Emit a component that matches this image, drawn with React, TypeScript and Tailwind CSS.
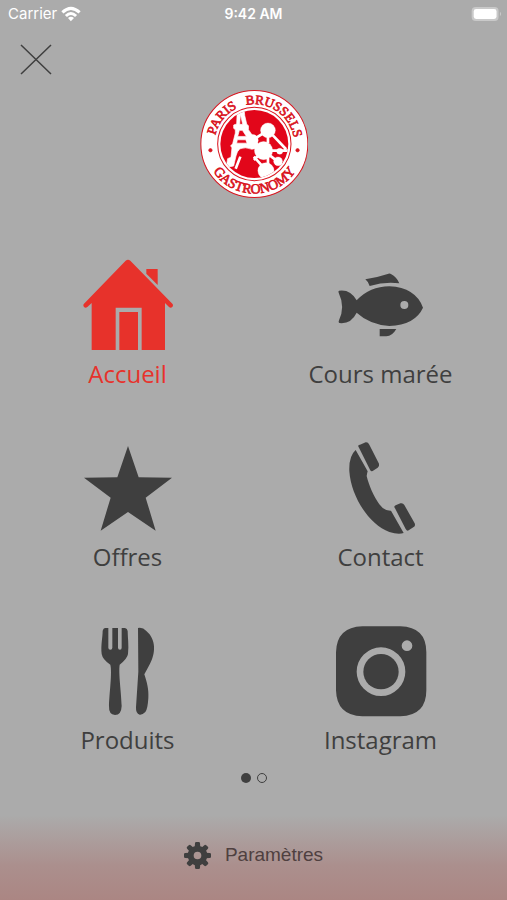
import type { ReactNode } from "react";

interface MenuItem {
  label: string;
  href: string;
  icon: ReactNode;
  active?: boolean;
}

function HomeIcon() {
  return (
    <svg viewBox="0 0 276 276" className="size-23" fill="currentColor" aria-hidden="true">
      <path d="M131 5q7-6 14 0L271 134q4 5 0 10q-5 4-10 0L249 132V273H179V146H101V273H29V132L16 144q-5 4-10 0q-4-5 0-10Z" />
      <path d="M112 159H168V273H112Z" />
      <path d="M193 30H227V78L193 44Z" />
    </svg>
  );
}

function FishIcon() {
  return (
    <svg viewBox="0 0 276 276" className="size-23" fill="currentColor" aria-hidden="true">
      <path d="M91 61Q125 56 158 45Q164 42 169 46Q184 53 193 73Q150 67 104 81Q100 68 91 61Z" />
      <path d="M134 210H184Q172 231 154 232H134Z" />
      <path
        fillRule="evenodd"
        d="M12 95Q46 90 65 124Q105 82 163 82Q242 86 264 146Q240 198 163 201Q103 196 65 161Q48 196 13 192Q9 190 12 184Q31 143 11 101Q9 97 12 95ZM208 126a12 12 0 1 0 0 24a12 12 0 1 0 0-24Z"
      />
    </svg>
  );
}

function StarIcon() {
  return (
    <svg viewBox="0 0 276 276" className="size-23" fill="currentColor" aria-hidden="true">
      <path d="M138 12L170 106L270 107L191 167L221 266L138 210L56 266L86 167L6 107L106 106Z" />
    </svg>
  );
}

function PhoneIcon() {
  return (
    <svg viewBox="5 0 276 276" className="size-23" fill="currentColor" aria-hidden="true">
      <path d="M67 24Q46 42 48 88C53 163 107 248 168 270Q194 278 211 273L173 206Q152 207 138 187C121 162 107 131 100 102Q101 94 103 88Z" />
      <path d="M77 17Q71 9 80 8L97 1Q104 0 108 8L137 65Q139 73 133 77L118 87Q113 89 110 83Z" />
      <path d="M185 199Q180 193 187 190L201 184Q209 182 213 189L244 244Q247 252 241 255L226 265Q221 268 217 261Z" />
    </svg>
  );
}

function CutleryIcon() {
  return (
    <svg viewBox="0 0 276 276" className="size-23" fill="currentColor" aria-hidden="true">
      <path d="M69 9H79V68Q79 74 85 74Q91 74 91 68V9H108V68Q108 74 114 74Q119 74 119 68V9H129Q136 10 137 18C137 37 141 60 138 87Q136 101 113 119C109 143 118 204 119 243Q118 270 99 270Q80 269 81 243C82 204 91 143 85 119Q62 104 59 87C56 60 62 37 62 17Q64 10 69 9Z" />
      <path d="M168 9Q182 6 193 18C223 43 221 85 204 116Q195 133 187 148C194 170 201 192 199 220Q197 253 190 261Q181 270 173 269Q161 266 162 247L169 140Z" />
    </svg>
  );
}

function InstagramIcon() {
  return (
    <svg viewBox="0 0 276 276" className="size-23" fill="currentColor" aria-hidden="true">
      <path
        fillRule="evenodd"
        d="M82 4H196Q274 6 274 82V196Q274 272 196 274H82Q5 272 3 196V82Q5 6 82 4ZM138 67a73 73 0 1 0 0 146a73 73 0 1 0 0-146ZM216 46a16 16 0 1 0 0 32a16 16 0 1 0 0-32Z"
      />
      <circle cx="138" cy="140" r="53" />
    </svg>
  );
}

function GearIcon() {
  const teeth = [0, 45, 90, 135, 180, 225, 270, 315];

  return (
    <svg viewBox="0 0 81 81" className="size-[27px]" fill="currentColor" aria-hidden="true">
      {teeth.map((angle) => (
        <path
          key={angle}
          d="M32 17L33 4Q33 0 37 0H44Q48 0 48 4L49 17Z"
          transform={`rotate(${angle} 40.5 40.5)`}
        />
      ))}
      <path
        fillRule="evenodd"
        d="M40.5 11a29.500 29.500 0 1 0 0 59a29.500 29.500 0 1 0 0-59ZM40.500 29a11.500 11.500 0 1 1 0 23a11.500 11.500 0 1 1 0-23Z"
      />
    </svg>
  );
}

function Logo() {
  return (
    <svg viewBox="32 32 321 321" className="size-27" role="img" aria-label="Paris Brussels Gastronomy">
      <defs>
        <path id="arc-top" d="M75 192.500A118.500 118.500 0 0 1 312 192.500" />
        <path id="arc-bottom" d="M46.500 192.500A147 147 0 0 0 340.500 192.500" />
        <clipPath id="disc">
          <circle cx="193.500" cy="192.500" r="101" />
        </clipPath>
      </defs>
      <circle cx="193.500" cy="192.500" r="159" fill="#fff" stroke="#d9141e" strokeWidth="3" />
      <circle cx="193.500" cy="192.500" r="109" fill="none" stroke="#d9141e" strokeWidth="3" />
      <circle cx="193.500" cy="192.500" r="101" fill="#e2061a" />
      <g clipPath="url(#disc)" fill="#fff" stroke="#fff">
        {/* Eiffel tower */}
        <path
          strokeWidth="2"
          fillRule="evenodd"
          d="M134 97L163 90L165 108L171 134L176 138V150L190 170L200 180L206 204L186 208Q166 200 150 207Q142 214 139 228L132 258L110 262L114 236L124 232L127 204L123 198L129 192L137 160V150L132 146V136L141 133L142 108ZM152 104L150 134H159ZM149 152L144 170H170L158 152ZM143 180L141 190H172L168 180Z"
        />
        {/* Atomium */}
        <circle cx="234" cy="152" r="22" />
        <circle cx="221" cy="212" r="27" />
        <circle cx="188" cy="181" r="17" />
        <circle cx="269" cy="214" r="9" />
        <circle cx="264" cy="244" r="13" />
        <circle cx="228" cy="272" r="24" />
        <path
          d="M234 152V190M188 181L234 152M248 166L288 208M221 212H296M221 212L278 256M221 212L192 240M188 181L221 212M234 220V270M152 230L138 266M192 230L224 266"
          fill="none"
          strokeWidth="8"
        />
      </g>
      <g fill="#d9141e" stroke="#d9141e" strokeWidth="2" fontFamily="'Liberation Serif', serif" fontSize="39">
        <text>
          <textPath href="#arc-top" startOffset="26">PARIS</textPath>
        </text>
        <text>
          <textPath href="#arc-top" startOffset="161">BRUSSELS</textPath>
        </text>
        <text textAnchor="middle" fontSize="41">
          <textPath href="#arc-bottom" startOffset="50%">GASTRONOMY</textPath>
        </text>
        <circle cx="63" cy="211" r="5" />
        <circle cx="322" cy="211" r="5" />
      </g>
    </svg>
  );
}

function StatusBar() {
  return (
    <div className="grid grid-cols-3 items-center h-7 px-1 font-['Inter',sans-serif] text-sm text-white">
      <div className="flex items-center gap-1 pl-1">
        <span className="text-[15px]">Carrier</span>
        <svg viewBox="0 0 57 45" className="w-5 h-4" fill="currentColor" aria-label="Wi-Fi">
          <path d="M1 15Q28-11 56 15L50 21Q28 1 7 21Z" />
          <path d="M11 25Q28 9 46 25L40 31Q28 20 17 31Z" />
          <path d="M20 34Q28 27 37 34L28 43Z" />
        </svg>
      </div>
      <span className="text-center font-semibold">9:42 AM</span>
      <svg viewBox="0 0 94 45" className="w-8 h-4 justify-self-end" aria-label="Battery">
        <rect x="2" y="2" width="79" height="41" rx="12" fill="#c9c9c9" />
        <rect x="8" y="8" width="67" height="29" rx="7" fill="#fff" />
        <path d="M85 16Q92 22 85 29Z" fill="#c9c9c9" />
      </svg>
    </div>
  );
}

const menuItems: MenuItem[] = [
  { label: "Accueil", href: "#accueil", icon: <HomeIcon />, active: true },
  { label: "Cours marée", href: "#cours-maree", icon: <FishIcon /> },
  { label: "Offres", href: "#offres", icon: <StarIcon /> },
  { label: "Contact", href: "#contact", icon: <PhoneIcon /> },
  { label: "Produits", href: "#produits", icon: <CutleryIcon /> },
  { label: "Instagram", href: "#instagram", icon: <InstagramIcon /> },
];

export default function App() {
  return (
    <div className="flex flex-col min-h-screen bg-[#ababab] text-[#3f3f3f]">
      <StatusBar />

      <header className="flex flex-col px-5 pt-4">
        <button type="button" aria-label="Fermer" className="self-start">
          <svg viewBox="0 0 32 32" className="size-8" fill="none" stroke="currentColor" strokeWidth="1.500">
            <path d="M1 1L31 30M31 1L1 30" />
          </svg>
        </button>
        <div className="self-center mt-3.5">
          <Logo />
        </div>
      </header>

      <nav className="grid grid-cols-2 gap-y-[51px] mt-[61px] pl-px font-['Open_Sans',sans-serif] text-2xl">
        {menuItems.map((item) => (
          <a
            key={item.label}
            href={item.href}
            aria-current={item.active ? "page" : undefined}
            className={`flex flex-col items-center gap-[5px] ${item.active ? "text-[#e7322b]" : ""}`}
          >
            {item.icon}
            <span className="leading-[35px]">{item.label}</span>
          </a>
        ))}
      </nav>

      <div className="flex justify-center gap-1.5 mt-4">
        <button type="button" aria-label="Page 1" className="size-2.5 rounded-full bg-[#3f3f3f]" />
        <button type="button" aria-label="Page 2" className="size-2.5 rounded-full border border-[#3f3f3f]" />
      </div>

      <footer className="flex grow justify-center items-center mt-8 pb-1 bg-linear-to-b from-[#ababab] via-[#ab8f8d] via-60% to-[#ab8683]">
        <a
          href="#parametres"
          className="flex items-center gap-3.5 font-['Liberation_Sans',sans-serif] text-[19px] text-[#4f4040]"
        >
          <span className="text-[#3f3f3f]">
            <GearIcon />
          </span>
          Paramètres
        </a>
      </footer>
    </div>
  );
}
